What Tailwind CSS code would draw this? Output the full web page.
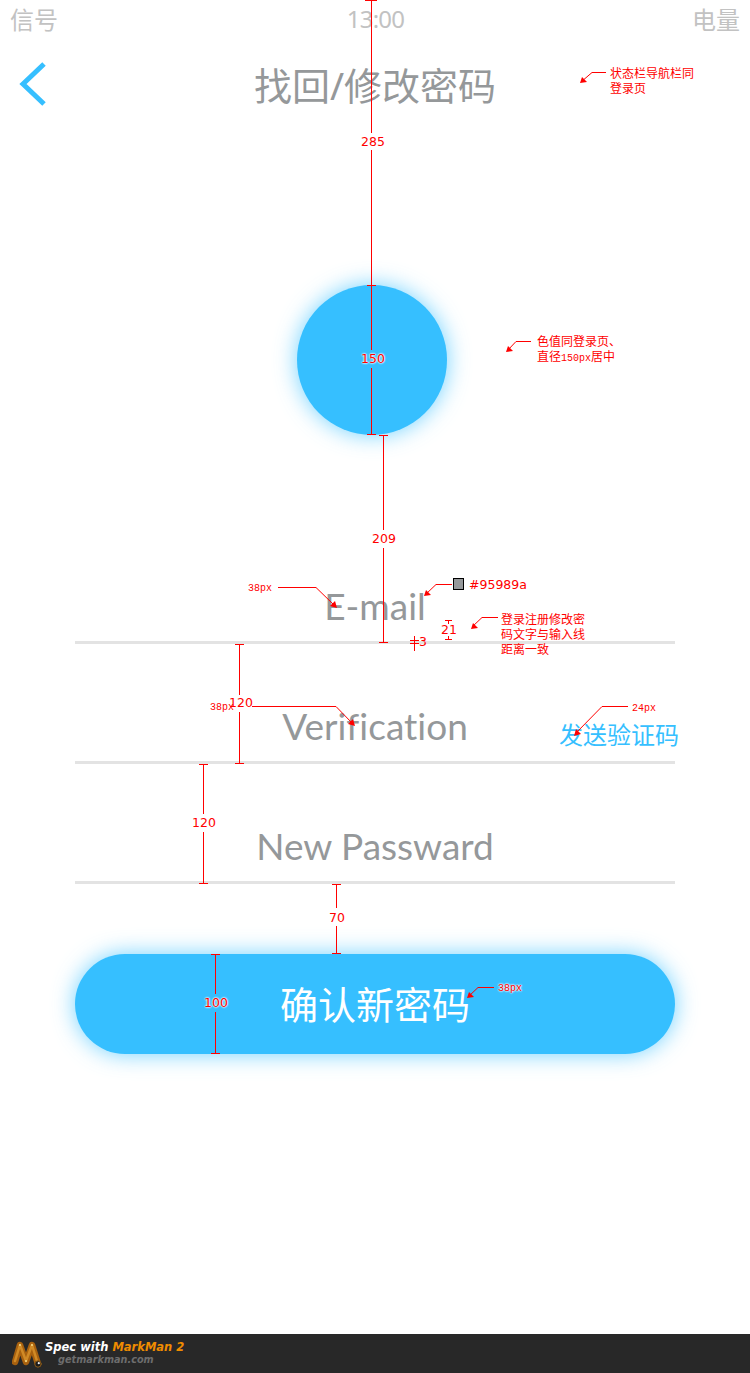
<!DOCTYPE html>
<html lang="zh-CN">
  <head>
    <meta charset="UTF-8" />
    <meta name="viewport" content="width=device-width, initial-scale=1" />
    <title>找回/修改密码</title>
    <script src="https://cdn.jsdelivr.net/npm/@tailwindcss/browser@4"></script>
  </head>
  <body class="relative w-[750px] h-[1373px] overflow-hidden bg-white font-['Noto_Sans','Noto_Sans_CJK_SC',sans-serif]">
    <!-- status bar -->
    <div class="flex justify-between h-[40px] px-[10px] text-[24px] leading-[39px] text-[#c2c2c2]">
      <span>信号</span>
      <span class="ml-[1px] -mt-[1px] tracking-[-0.8px]">13:00</span>
      <span>电量</span>
    </div>

    <!-- nav bar -->
    <div class="relative h-[90px] flex items-center justify-center text-[38px] text-[#95989a]">
      <svg class="absolute left-[18px] top-[21px]" width="30" height="46" viewBox="0 0 30 46" fill="none">
        <path d="M26 3 L5 23 L26 43" stroke="#36bfff" stroke-width="5" />
      </svg>
      <span class="leading-[92px]">找回/修改密码</span>
    </div>

    <!-- avatar -->
    <div class="mt-[155px] ml-[297px] w-[150px] h-[150px] rounded-full bg-[#36bfff] shadow-[0_0_22px_rgba(54,191,255,0.7)]"></div>

    <!-- form -->
    <div class="mt-[89px] mx-[75px] w-[600px] text-[37px] text-[#95989a] font-['Lato','Noto_Sans_CJK_SC',sans-serif] [font-variant-ligatures:none]">
      <div class="h-[120px] border-b-[3px] border-[#e3e3e3] flex items-end justify-center pb-[7px] leading-[56px]">E-mail</div>
      <div class="relative h-[120px] border-b-[3px] border-[#e3e3e3] flex items-end justify-center pb-[7px] leading-[56px]">
        Verification
        <span class="absolute right-[-4px] bottom-[9px] text-[24px] leading-[34px] text-[#36bfff]">发送验证码</span>
      </div>
      <div class="h-[120px] border-b-[3px] border-[#e3e3e3] flex items-end justify-center pb-[7px] leading-[56px]">New Passward</div>
      <div class="mt-[70px] h-[100px] rounded-full bg-[#36bfff] shadow-[0_0_22px_rgba(54,191,255,0.7)] flex items-center justify-center text-[38px] text-white">确认新密码</div>
    </div>

    <!-- markman measure lines and arrows -->
    <svg class="absolute inset-0" width="750" height="1373" fill="none" stroke="#ff0000" shape-rendering="crispEdges">
      <path d="M371.5 0V133M371.5 150V285M367 285.5h9M371.5 285V350M371.5 368V435M367 434.5h9" />
      <path d="M365 0.5h12" />
      <path d="M383.5 435V530M383.5 548V643M379 435.5h9M379 642.5h9" />
      <path d="M239.5 644V695M239.5 712V764M235 644.5h9M235 763.5h9" />
      <path d="M203.5 764V814M203.5 832V884M199 764.5h9M199 883.5h9" />
      <path d="M336.5 884V908M336.5 926V954M332 884.5h9M332 953.5h9" />
      <path d="M215.5 954V994M215.5 1012V1054M211 954.5h9M211 1053.5h9" />
      <path d="M414.5 636V651M410 640.5h9M410 643.5h9" />
      <path d="M445 620.5h7M448.5 620V624M448.5 636V640M445 639.5h7" />
      <g shape-rendering="auto">
        <path d="M278 587.5H316L335 606" />
        <path d="M452 584.5H436L425 595" />
        <path d="M498 617.5H482L472 627" />
        <path d="M252 706.5H336L353 724" />
        <path d="M628 706.5H602L575 734" />
        <path d="M494 987.5H478L468 997" />
        <path d="M531 341.5H516L507 351" />
        <path d="M606 72.5H592L581 82" />
      </g>
      <g fill="#ff0000" stroke="none" shape-rendering="auto">
        <path d="M337 608L330 606L335 601Z" />
        <path d="M424 596L426 590L431 595Z" />
        <path d="M471 629L473 623L478 628Z" />
        <path d="M355 726L348 724L353 719Z" />
        <path d="M574 736L576 729L581 734Z" />
        <path d="M467 998L469 992L474 997Z" />
        <path d="M506 352L508 346L513 351Z" />
        <path d="M580 83L582 77L587 82Z" />
      </g>
    </svg>

    <!-- markman labels -->
    <span class="absolute left-[361px] top-[133px] text-[12.5px] leading-[17px] text-[#ff0000] font-['DejaVu_Sans']">285</span>
    <span class="absolute left-[361px] top-[350px] text-[12.5px] leading-[17px] text-[#ff0000] font-['DejaVu_Sans'] [text-shadow:0_0_2px_#fff,0_0_2px_#fff,0_0_2px_#fff]">150</span>
    <span class="absolute left-[372px] top-[530px] text-[12.5px] leading-[17px] text-[#ff0000] font-['DejaVu_Sans']">209</span>
    <span class="absolute left-[229px] top-[694px] text-[12.5px] leading-[17px] text-[#ff0000] font-['DejaVu_Sans']">120</span>
    <span class="absolute left-[192px] top-[814px] text-[12.5px] leading-[17px] text-[#ff0000] font-['DejaVu_Sans']">120</span>
    <span class="absolute left-[329px] top-[909px] text-[12.5px] leading-[17px] text-[#ff0000] font-['DejaVu_Sans']">70</span>
    <span class="absolute left-[204px] top-[994px] text-[12.5px] leading-[17px] text-[#ff0000] font-['DejaVu_Sans'] [text-shadow:0_0_2px_#fff,0_0_2px_#fff,0_0_2px_#fff]">100</span>
    <span class="absolute left-[419px] top-[633px] text-[12.5px] leading-[17px] text-[#ff0000] font-['DejaVu_Sans']">3</span>
    <span class="absolute left-[441px] top-[621px] text-[12.5px] leading-[17px] text-[#ff0000] font-['DejaVu_Sans']">21</span>
    <span class="absolute left-[469px] top-[576px] text-[12.5px] leading-[17px] text-[#ff0000] font-['DejaVu_Sans']">#95989a</span>
    <span class="absolute left-[453px] top-[578px] w-[11px] h-[12px] bg-[#95989a] border border-black"></span>

    <span class="absolute left-[248px] top-[582px] text-[10px] leading-[13px] text-[#ff0000] font-['Liberation_Mono']">38px</span>
    <span class="absolute left-[210px] top-[701px] text-[10px] leading-[13px] text-[#ff0000] font-['Liberation_Mono']">38px</span>
    <span class="absolute left-[632px] top-[702px] text-[10px] leading-[13px] text-[#ff0000] font-['Liberation_Mono']">24px</span>
    <span class="absolute left-[498px] top-[982px] text-[10px] leading-[13px] text-[#ff0000] font-['Liberation_Mono'] [text-shadow:0_0_2px_#fff,0_0_2px_#fff,0_0_2px_#fff]">38px</span>

    <div class="absolute left-[610px] top-[66px] w-[90px] text-[12px] leading-[15px] text-[#ff0000]">状态栏导航栏同<br />登录页</div>
    <div class="absolute left-[537px] top-[336px] w-[90px] text-[12px] leading-[15px] text-[#ff0000] font-['Liberation_Mono','Noto_Sans_CJK_SC',monospace]">色值同登录页、<br />直径<span class="text-[10px]">150px</span>居中</div>
    <div class="absolute left-[501px] top-[612px] w-[90px] text-[12px] leading-[15px] text-[#ff0000]">登录注册修改密<br />码文字与输入线<br />距离一致</div>

    <!-- markman footer -->
    <div class="absolute left-0 right-0 bottom-0 h-[39px] bg-[#282828] flex items-center pl-[12px]">
      <svg width="32" height="28" viewBox="0 0 32 28" fill="none" stroke-linecap="round" stroke-linejoin="round">
        <path d="M3 22L8 5L14 22L20 5L26 24" stroke="#a8610f" stroke-width="6.5" />
        <path d="M3 21L8 5L14 21L20 5L25 21" stroke="#d08a26" stroke-width="2.5" />
        <g fill="#f4dc8c">
          <circle cx="8" cy="5" r="1" />
          <circle cx="20" cy="5" r="1" />
          <circle cx="14" cy="21" r="1" />
        </g>
        <circle cx="26" cy="24" r="3.2" fill="#1c1c1c" stroke="#8a5a1a" stroke-width="1" />
        <circle cx="26.8" cy="23.2" r="1.1" fill="#eee" />
      </svg>
      <div class="ml-[1px] italic font-bold font-['DejaVu_Sans'] leading-none">
        <div class="text-[11.5px] text-white">Spec with <span class="text-[#f08c00]">MarkMan 2</span></div>
        <div class="ml-[13px] mt-[2px] text-[9.7px] text-[#6d6d6d]">getmarkman.com</div>
      </div>
    </div>
  </body>
</html>
